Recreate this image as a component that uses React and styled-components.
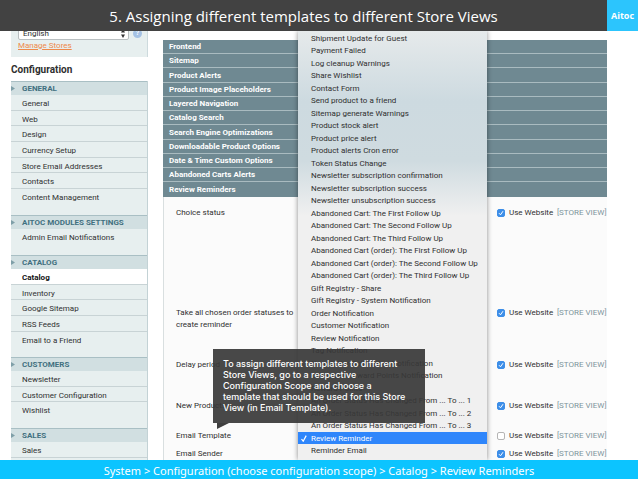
import React, { useState } from "react";
import styled, { createGlobalStyle } from "styled-components";

const GlobalStyle = createGlobalStyle`
  * {
    box-sizing: border-box;
  }
  body {
    margin: 0;
    background: #fff;
    font-family: Roboto, "Liberation Sans", Arial, sans-serif;
    font-size: 8px;
    color: #2f2f2f;
  }
  ul {
    list-style: none;
    margin: 0;
    padding: 0;
  }
`;

const Page = styled.div`
  display: grid;
  grid-template-rows: 31px minmax(0, 1fr) 19px;
  height: 100vh;
  overflow: hidden;
`;

const TopBar = styled.header`
  display: flex;
  background: #424242;
  color: #fff;
`;

const Title = styled.h1`
  flex: 1;
  margin: 0;
  text-align: center;
  font: 400 15px/33px "Open Sans", "Noto Sans", sans-serif;
`;

const Brand = styled.a`
  width: 31px;
  background: #2cc5fd;
  color: #fff;
  text-align: center;
  text-decoration: none;
  font: 700 9px/32px "Open Sans", sans-serif;
`;

const Body = styled.div`
  display: flex;
  gap: 15px;
  padding: 0 31px 0 11px;
  overflow: hidden;
`;

const Sidebar = styled.aside`
  flex: none;
  width: 137px;
`;

const Scope = styled.div`
  height: 31px;
  padding-left: 7px;
  background: #e7efef;
  border-right: 1px solid #cddadd;
  a {
    display: block;
    width: max-content;
    color: #ee8a4b;
    line-height: 11px;
  }
`;

const ScopeRow = styled.div`
  display: flex;
  align-items: flex-end;
  gap: 4px;
  height: 14px;
  margin-top: -5px;
`;

const SelectBox = styled.div`
  position: relative;
  width: 111px;
  select {
    display: block;
    width: 100%;
    height: 14px;
    padding: 0 4px;
    appearance: none;
    border: 1px solid #b9bfc1;
    border-radius: 2px;
    background: #fff;
    color: #2f2f2f;
    font: inherit;
  }
  svg {
    position: absolute;
    top: 3px;
    right: 3px;
  }
`;

const Help = styled.button`
  width: 9px;
  height: 9px;
  margin-bottom: 2px;
  padding: 0;
  border: 0;
  border-radius: 50%;
  background: #a5c2e4;
  color: #fff;
  font: 700 7px/9px Roboto, sans-serif;
`;

const SideTitle = styled.h2`
  height: 24px;
  margin: 0;
  font-size: 10px;
  line-height: 26px;
`;

const Group = styled.section`
  padding-bottom: 10px;
  background: #e7efef;
  border-right: 1px solid #c3d2d5;
`;

const GroupTitle = styled.h3`
  display: flex;
  align-items: center;
  gap: 7px;
  height: 14px;
  margin: 0;
  border-top: 1px solid #a9bfc4;
  background: #d1dfe1;
  color: #41707f;
  font-size: 8px;
`;

const GroupList = styled.ul`
  display: grid;
  grid-auto-rows: 16px 15px 16px;
`;

const GroupItem = styled.li`
  padding-left: 11px;
  border-bottom: 1px solid ${(p) => (p.$last ? "transparent" : "#c8d3d5")};
  background: ${(p) => (p.$active ? "#fff" : "none")};
  line-height: 17px;
  a {
    color: ${(p) => (p.$active ? "#111" : "#2f2f2f")};
    font-weight: ${(p) => (p.$active ? 700 : 400)};
    text-decoration: none;
  }
`;

const Content = styled.main`
  position: relative;
  flex: 1;
  min-width: 0;
  padding-top: 9px;
`;

const Sections = styled.div`
  display: grid;
  grid-auto-rows: 14px 14px 15px 14px;
`;

const SectionBar = styled.button`
  padding: 0 0 0 6px;
  border: 0;
  border-bottom: 1px solid #a9bbc0;
  background: #6f8992;
  color: #fff;
  text-align: left;
  font: 700 8px/13px Roboto, "Liberation Sans", sans-serif;
  &:last-child {
    border-bottom-color: #6f8992;
  }
`;

const Form = styled.form`
  height: 100%;
  padding: 10px 0 0 12px;
  border-left: 1px solid #d9dfe0;
  background: #fbfbfb;
`;

const Field = styled.div`
  display: grid;
  grid-template-columns: 121px 1fr 110px;
  min-height: ${(p) => p.$space}px;
  line-height: 12px;
`;

const Inherit = styled.div`
  display: flex;
  height: 12px;
  align-items: center;
  white-space: nowrap;
  label {
    flex: none;
    width: 48px;
  }
  span {
    color: #7d959c;
  }
`;

const Check = styled.input`
  flex: none;
  appearance: none;
  width: 8px;
  height: 8px;
  margin: 0 4px 0 0;
  border: 1px solid #b5b5b5;
  border-radius: 2px;
  background: #fff;
  &:checked {
    border-color: #3d8ee8;
    background: #3d8ee8
      url("data:image/svg+xml,%3Csvg xmlns='http://www.w3.org/2000/svg' viewBox='0 0 6 6'%3E%3Cpath d='M1 3.2 2.5 4.8 5 1.2' fill='none' stroke='white'/%3E%3C/svg%3E");
  }
`;

const Menu = styled.ul`
  position: absolute;
  top: 0;
  bottom: 0;
  left: 135px;
  right: 120px;
  display: grid;
  grid-auto-rows: 12px 13px;
  padding-top: 1px;
  overflow: hidden;
  background: linear-gradient(#e6eaeb, #cddae0 70px, #cfdbe0 130px, #f0f0f0 185px);
  box-shadow: 0 0 5px rgba(0, 0, 0, 0.45);
`;

const Option = styled.li`
  display: flex;
  align-items: center;
  white-space: nowrap;
  background: ${(p) => (p.$selected ? "#2f86fb" : "none")};
  color: ${(p) => (p.$selected ? "#fff" : "#2f2f2f")};
`;

const Mark = styled.span`
  flex: none;
  width: 13px;
  padding-left: 3px;
  svg {
    display: block;
  }
`;

const Callout = styled.p`
  position: absolute;
  top: 318px;
  left: 50px;
  width: 212px;
  margin: 0;
  padding: 9px 10px 10px;
  background: rgba(56, 56, 56, 0.92);
  color: #fff;
  font: 500 9px/11px Inter, "Open Sans", sans-serif;
  &::after {
    content: "";
    position: absolute;
    top: 100%;
    left: 4px;
    border-top: 6px solid #3f3f3f;
    border-right: 12px solid transparent;
  }
`;

const Footer = styled.footer`
  background: #0cc4ff;
  color: #fff;
  text-align: center;
  font: 400 11px/21px "Noto Sans", "Open Sans", sans-serif;
`;

const groups = [
  {
    title: "GENERAL",
    items: ["General", "Web", "Design", "Currency Setup", "Store Email Addresses", "Contacts", "Content Management"],
  },
  { title: "AITOC MODULES SETTINGS", items: ["Admin Email Notifications"] },
  { title: "CATALOG", items: ["Catalog", "Inventory", "Google Sitemap", "RSS Feeds", "Email to a Friend"] },
  { title: "CUSTOMERS", items: ["Newsletter", "Customer Configuration", "Wishlist"] },
  { title: "SALES", items: ["Sales", "Sales Emails"] },
];

const sections = [
  "Frontend",
  "Sitemap",
  "Product Alerts",
  "Product Image Placeholders",
  "Layered Navigation",
  "Catalog Search",
  "Search Engine Optimizations",
  "Downloadable Product Options",
  "Date & Time Custom Options",
  "Abandoned Carts Alerts",
  "Review Reminders",
];

const fields = [
  { label: "Choice status", space: 100, inherit: true },
  { label: "Take all chosen order statuses to create reminder", space: 52, inherit: true },
  { label: "Delay period", space: 41, inherit: true },
  { label: "New Products", space: 30, inherit: true },
  { label: "Email Template", space: 18, inherit: false },
  { label: "Email Sender", space: 18, inherit: true },
];

const templates = [
  "Shipment Update for Guest",
  "Payment Failed",
  "Log cleanup Warnings",
  "Share Wishlist",
  "Contact Form",
  "Send product to a friend",
  "Sitemap generate Warnings",
  "Product stock alert",
  "Product price alert",
  "Product alerts Cron error",
  "Token Status Change",
  "Newsletter subscription confirmation",
  "Newsletter subscription success",
  "Newsletter unsubscription success",
  "Abandoned Cart: The First Follow Up",
  "Abandoned Cart: The Second Follow Up",
  "Abandoned Cart: The Third Follow Up",
  "Abandoned Cart (order): The First Follow Up",
  "Abandoned Cart (order): The Second Follow Up",
  "Abandoned Cart (order): The Third Follow Up",
  "Gift Registry - Share",
  "Gift Registry - System Notification",
  "Order Notification",
  "Customer Notification",
  "Review Notification",
  "Tag Notification",
  "Newsletter Subscriber Notification",
  "Customer Reward Points Notification",
  "Reward Points",
  "An Order Status Has Changed From ... To ... 1",
  "An Order Status Has Changed From ... To ... 2",
  "An Order Status Has Changed From ... To ... 3",
  "Review Reminder",
  "Reminder Email",
  "Support Email",
];

const App = () => {
  const [selected, setSelected] = useState("Review Reminder");

  return (
    <Page>
      <GlobalStyle />
      <TopBar>
        <Title>5. Assigning different templates to different Store Views</Title>
        <Brand href="#">Aitoc</Brand>
      </TopBar>
      <Body>
        <Sidebar>
          <Scope>
            <ScopeRow>
              <SelectBox>
                <select aria-label="Store view">
                  <option>English</option>
                </select>
                <svg width="6" height="9" viewBox="0 0 6 9" fill="#333">
                  <path d="M3 0 5 3.5H1zM3 9 1 5.5h4z" />
                </svg>
              </SelectBox>
              <Help type="button">?</Help>
            </ScopeRow>
            <a href="#">Manage Stores</a>
          </Scope>
          <SideTitle>Configuration</SideTitle>
          {groups.map((group) => (
            <Group key={group.title}>
              <GroupTitle>
                <svg width="4" height="5" viewBox="0 0 4 5" fill="#7f9fa8">
                  <path d="M0 0 4 2.5 0 5z" />
                </svg>
                {group.title}
              </GroupTitle>
              <GroupList>
                {group.items.map((item, i) => (
                  <GroupItem key={item} $active={item === "Catalog"} $last={i === group.items.length - 1}>
                    <a href="#">{item}</a>
                  </GroupItem>
                ))}
              </GroupList>
            </Group>
          ))}
        </Sidebar>
        <Content>
          <Sections>
            {sections.map((name) => (
              <SectionBar key={name} type="button">
                {name}
              </SectionBar>
            ))}
          </Sections>
          <Form>
            {fields.map((field) => (
              <Field key={field.label} $space={field.space}>
                <div>{field.label}</div>
                <div />
                <Inherit>
                  <Check type="checkbox" id={field.label} defaultChecked={field.inherit} />
                  <label htmlFor={field.label}>Use Website</label>
                  <span>[STORE VIEW]</span>
                </Inherit>
              </Field>
            ))}
          </Form>
          <Menu role="listbox" aria-label="Email Template">
            {templates.map((name) => (
              <Option
                key={name}
                role="option"
                aria-selected={name === selected}
                $selected={name === selected}
                onClick={() => setSelected(name)}
              >
                <Mark>
                  {name === selected && (
                    <svg width="6" height="7" viewBox="0 0 6 7" fill="none" stroke="#fff" strokeWidth="1.2">
                      <path d="M0.5 4 2.2 6.2 5.2 0.6" />
                    </svg>
                  )}
                </Mark>
                {name}
              </Option>
            ))}
          </Menu>
          <Callout>
            To assign different templates to different
            <br />
            Store Views, go to a respective
            <br />
            Configuration Scope and choose a
            <br />
            template that should be used for this Store
            <br />
            View (in Email Template).
          </Callout>
        </Content>
      </Body>
      <Footer>System &gt; Configuration (choose configuration scope) &gt; Catalog &gt; Review Reminders</Footer>
    </Page>
  );
};

export default App;
